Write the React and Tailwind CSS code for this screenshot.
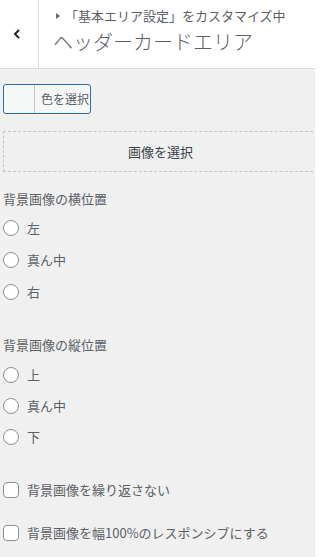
const jp = { fontFamily: '"Noto Sans CJK JP", "Liberation Sans", sans-serif' };

function Radio({ label }) {
  return (
    <label className="flex h-8 items-center gap-[8px]">
      <span className="h-4 w-4 shrink-0 rounded-full border border-[#8c8f94] bg-white" />
      <span className="text-[13px] text-[#5c6166]">{label}</span>
    </label>
  );
}

function Check({ label, className = "" }) {
  return (
    <label className={"flex h-8 items-center gap-[8px] " + className}>
      <span className="h-4 w-4 shrink-0 rounded-[4px] border border-[#8c8f94] bg-white" />
      <span className="text-[13px] text-[#5c6166]">{label}</span>
    </label>
  );
}

export default function App() {
  return (
    <div className="min-h-[557px] w-[315px] overflow-hidden bg-[#f0f0f1]" style={jp}>
      <div className="flex h-[69px] border-b border-[#dcdcde] bg-white">
        <button className="flex w-[39px] shrink-0 items-center justify-center border-r border-[#dcdcde]">
          <svg width="8" height="10" viewBox="0 0 8 10" className="-ml-[4px]">
            <path d="M6 1 L2 5 L6 9" fill="none" stroke="#1d2327" strokeWidth="2" />
          </svg>
        </button>
        <div className="flex flex-col pl-[14px] pt-[6px]">
          <div className="flex items-center text-[13px] leading-[20px] text-[#5c6166]">
            <svg width="4" height="6" viewBox="0 0 4 6" className="ml-[3px] mr-[5px]">
              <path d="M0 0 L4 3 L0 6 Z" fill="#646970" />
            </svg>
            <span className="whitespace-nowrap">「基本エリア設定」をカスタマイズ中</span>
          </div>
          <div className="mt-[2px] whitespace-nowrap text-[20px] font-light leading-[28px] text-[#5c6166]">
            ヘッダーカードエリア
          </div>
        </div>
      </div>

      <div className="flex flex-col pl-[3px] pt-[15px]">
        <button className="flex h-[30px] w-[88px] overflow-hidden rounded-[3px] border border-[#2c6ca8] bg-[#f6f7f7]">
          <span className="h-full w-[31px] border-r border-[#c3c4c7]" />
          <span className="flex h-full flex-1 items-center pl-[6px] text-[12px] text-[#5c6166]">色を選択</span>
        </button>

        <button className="mt-[17px] flex h-[41px] w-[315px] items-center justify-center border border-dashed border-[#c3c4c7] text-[13px] text-[#3c434a]">
          画像を選択
        </button>

        <div className="mt-[17px] text-[13px] leading-[20px] text-[#5c6166]">背景画像の横位置</div>
        <div className="mt-[3px] flex flex-col">
          <Radio label="左" />
          <Radio label="真ん中" />
          <Radio label="右" />
        </div>

        <div className="mt-[27px] text-[13px] leading-[20px] text-[#5c6166]">背景画像の縦位置</div>
        <div className="mt-[4px] flex flex-col">
          <label className="flex h-[31px] items-center gap-[8px]">
            <span className="h-4 w-4 shrink-0 rounded-full border border-[#8c8f94] bg-white" />
            <span className="text-[13px] text-[#5c6166]">上</span>
          </label>
          <label className="flex h-[31px] items-center gap-[8px]">
            <span className="h-4 w-4 shrink-0 rounded-full border border-[#8c8f94] bg-white" />
            <span className="text-[13px] text-[#5c6166]">真ん中</span>
          </label>
          <label className="flex h-[31px] items-center gap-[8px]">
            <span className="h-4 w-4 shrink-0 rounded-full border border-[#8c8f94] bg-white" />
            <span className="text-[13px] text-[#5c6166]">下</span>
          </label>
        </div>

        <Check label="背景画像を繰り返さない" className="mt-[22px]" />
        <Check label="背景画像を幅100%のレスポンシブにする" className="mt-[11px]" />
      </div>
    </div>
  );
}
